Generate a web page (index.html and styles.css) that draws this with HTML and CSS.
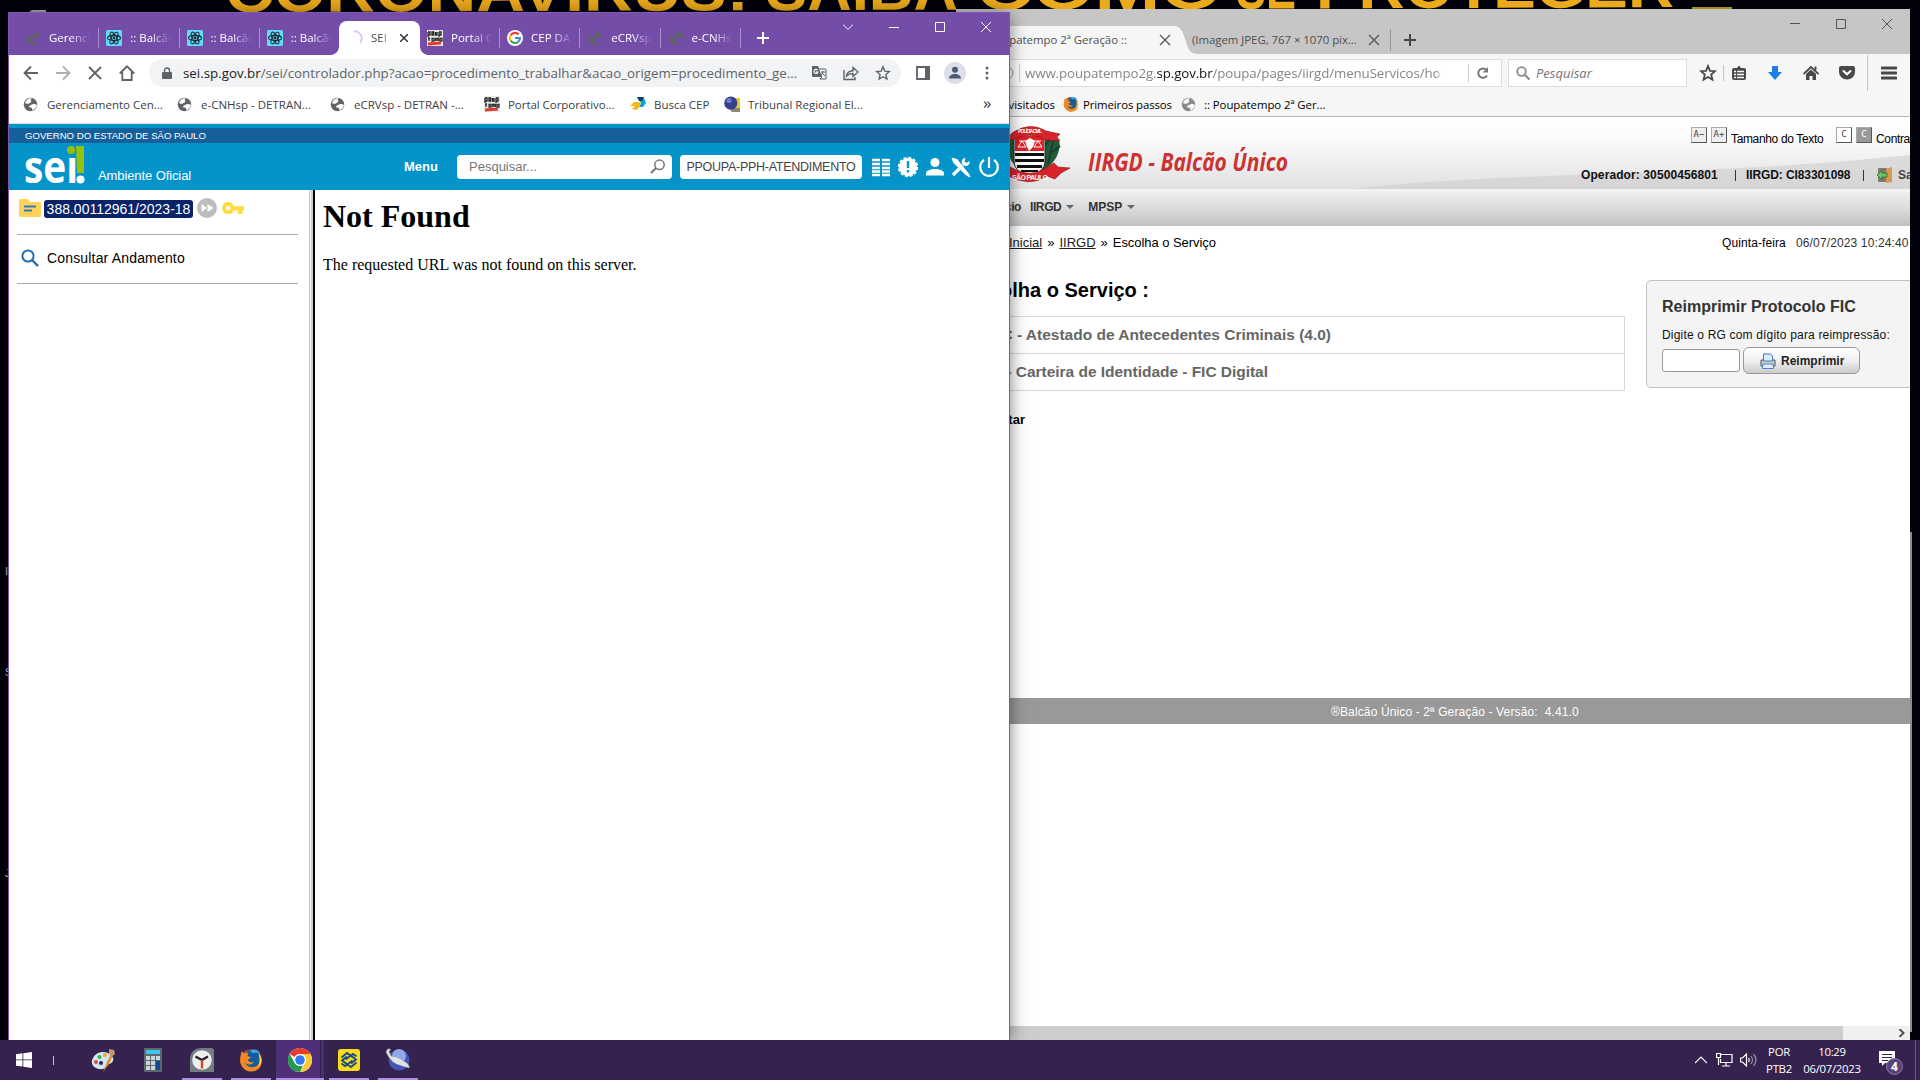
FILE: index.html
```html
<!DOCTYPE html>
<html lang="pt-BR">
<head>
<meta charset="utf-8">
<title>SEI</title>
<link rel="stylesheet" href="styles.css">
</head>
<body>
<svg class="defs" width="0" height="0">
  <defs>
    <symbol id="globe" viewBox="0 0 16 16"><circle cx="8" cy="8" r="7.2"/><path class="land" d="M2 6.500c1 .8 2.400 1 3.700.6 1-.3 1.300-1 2.300-1.300 1-.2 1-1.200.4-2C8 3 8.600 2 9.600 1.400 6.500.8 3 3 2 6.500zM9 8.200c1-.7 3-1 4.200-.5.7.3 1 .8 1.700.3-.1 3-2.400 5.600-5.400 6.600.8-1 .7-2.200-.1-2.800-1-.7-2.200-.4-2.900-1.200-.4-.6.7-1.800 2.500-2.400z"/></symbol>
    <symbol id="react" viewBox="0 0 16 16"><rect width="16" height="16" rx="1.500" fill="#61dafb"/><g fill="none" stroke="#20303a" stroke-width="1.100"><ellipse cx="8" cy="8" rx="6.500" ry="2.600"/><ellipse cx="8" cy="8" rx="6.500" ry="2.600" transform="rotate(60 8 8)"/><ellipse cx="8" cy="8" rx="6.500" ry="2.600" transform="rotate(120 8 8)"/></g><circle cx="8" cy="8" r="1.400" fill="#20303a"/></symbol>
    <symbol id="poupa" viewBox="0 0 16 16"><rect width="16" height="16" fill="#e8e8e4"/><path d="M1 2v5M1 2h2v3H1M5 2h1.600v3H5zM8.500 2v3H10V2M12 2v5M12 2h2v3h-2" fill="none" stroke="#222" stroke-width="1.300"/><path d="M2 7v4M1 8.500h2M5 8.500h2v2.500H5zM8.500 11V8.500h3V11M10 8.500V11M13 8.500h2V11h-2z" fill="none" stroke="#333" stroke-width="1.300"/><path d="M1 12.500l13-1v3l-13 1z" fill="#e23b2e"/></symbol>
    <symbol id="firefox" viewBox="0 0 24 24"><circle cx="12" cy="12.300" r="10.800" fill="#e4571b"/><circle cx="13" cy="10.500" r="8.800" fill="#145b9d"/><path d="M11 3c4-3 9-1 10.500 3-3-2-6-1-8-1z" fill="#3fa6dc"/><path d="M1.800 7c0-2 1-3.500 1.500-4 .3 1.500 1 2.200 2 2.500 1.500-.8 3-.8 4-.3-1 1-1 2-.5 3l3 .8c-.3 1.500-2.500 1.800-3 3 .6 2 3.400 3 6.200 1.500-1 3-6 4.500-9 1 1 4 6.500 6 10.500 4 4-2 5.500-6 4.500-10.500 3.500 6 1.200 15.500-9 15.500C4 23.500-.5 15 1.800 7z" fill="#f08a24"/><path d="M19.500 5c4 4 4 10 0 14 1-4 1.500-9 0-14z" fill="#fbd02b"/></symbol>
    <symbol id="chrome" viewBox="0 0 24 24"><circle cx="12" cy="12" r="12" fill="#fff"/><path d="M1.600 6A12 12 0 0 1 22.400 6H12a6 6 0 0 0-5.200 3z" fill="#e33b2e"/><path d="M22.400 6A12 12 0 0 1 12 24l5.200-9A6 6 0 0 0 17.200 9L12 6z" fill="#fcc934"/><path d="M12 24A12 12 0 0 1 1.600 6l5.200 9a6 6 0 0 0 8.200 2.200z" fill="#249a4d"/><circle cx="12" cy="12" r="6" fill="#fff"/><circle cx="12" cy="12" r="4.800" fill="#2f7df0"/></symbol>
  </defs>
</svg>

<svg class="wallpaper" viewBox="0 0 1920 1040">
  <g class="slogan" transform="rotate(-0.19 228 12)">
    <text x="225" y="12" textLength="524" lengthAdjust="spacingAndGlyphs">CORONAVIRUS:</text>
    <text x="766" y="12" textLength="192" lengthAdjust="spacingAndGlyphs">SAIBA</text>
    <text x="976" y="12" textLength="246" lengthAdjust="spacingAndGlyphs">COMO</text>
    <text x="1236" y="12" textLength="60" lengthAdjust="spacingAndGlyphs">SE</text>
    <text x="1316" y="12" textLength="358" lengthAdjust="spacingAndGlyphs">PROTEGER</text>
  </g>
  <path d="M29 12l3-2h14v2z" fill="#aaa"/>
  <rect x="1692" y="7" width="40" height="3" fill="#a79019"/>
  <text class="lbl" x="5" y="575">I</text><text class="lbl" x="5" y="676">S</text><text class="lbl" x="5" y="877">J</text>
</svg>

<section class="ff">
  <div class="ff-tabs">
    <div class="ff-tab on"><span>:: Poupatempo 2ª Geração ::</span><svg width="12" height="12" viewBox="0 0 12 12"><path d="M1 1l10 10M11 1L1 11"/></svg></div>
    <svg class="curve" width="24" height="28" viewBox="0 0 24 28"><path d="M0 0C9 0 10 7 13 16s4 11 11 12H0z" fill="#f6f6f6"/></svg>
    <div class="ff-tab two"><span>(Imagem JPEG, 767 × 1070 pix...</span><svg width="12" height="12" viewBox="0 0 12 12"><path d="M1 1l10 10M11 1L1 11"/></svg></div>
    <svg class="plus" width="12" height="12" viewBox="0 0 12 12"><path d="M6 0v12M0 6h12"/></svg>
    <div class="ff-ctl">
      <svg width="10" height="10"><path d="M0 4.500h10"/></svg>
      <svg width="10" height="10"><path d="M.5 .5h9v9h-9z"/></svg>
      <svg width="10" height="10"><path d="M0 0l10 10M10 0L0 10"/></svg>
    </div>
  </div>
  <div class="ff-nav">
    <div class="ff-url">
      <svg width="14" height="14" viewBox="0 0 14 14"><circle cx="7" cy="7" r="6" fill="none" stroke="#999"/></svg>
      <i></i><span class="addr">www.poupatempo2g.<b>sp.gov.br</b>/poupa/pages/iirgd/menuServicos/home</span><i></i>
      <svg class="reload" width="14" height="14" viewBox="0 0 14 14"><path d="M11 9.500A4.700 4.700 0 1 1 10.500 4" fill="none" stroke="#777" stroke-width="2"/><path d="M12 1v5.500H6.800z" fill="#777"/></svg>
    </div>
    <div class="ff-search"><svg width="14" height="14" viewBox="0 0 14 14"><circle cx="5.500" cy="5.500" r="4.300" fill="none" stroke="#8a8a8a" stroke-width="1.800"/><path d="M8.500 8.500l5 5" stroke="#8a8a8a" stroke-width="2.200"/></svg><span>Pesquisar</span></div>
    <div class="ff-ico">
      <svg width="18" height="18" viewBox="0 0 18 18"><path d="M9 2l2 4.800 5 .4-3.800 3.400 1.200 5L9 13l-4.400 2.600 1.200-5L2 7.200l5-.4z" fill="none" stroke="#484848" stroke-width="1.800"/></svg>
      <i></i>
      <svg width="16" height="16" viewBox="0 0 16 16"><path d="M3 3h3l2-2.500L10 3h3a2 2 0 0 1 2 2v8a2 2 0 0 1-2 2H3a2 2 0 0 1-2-2V5a2 2 0 0 1 2-2z" fill="#484848"/><path d="M3 6.500h2M6 6.500h7M3 9.500h2M6 9.500h7M3 12.500h2M6 12.500h7" stroke="#fff" stroke-width="1.500"/></svg>
      <svg width="16" height="16" viewBox="0 0 16 16"><path d="M5 1h6v6h4l-7 8-7-8h4z" fill="#1c80ea"/></svg>
      <svg width="16" height="16" viewBox="0 0 16 16"><path d="M.5 9L8 2l7.500 7" fill="none" stroke="#484848" stroke-width="1.800"/><path d="M3 9l5-4.500L13 9v6H9.500v-4h-3v4H3zM11.500 1.500h2V5h-2z" fill="#484848"/></svg>
      <svg width="16" height="16" viewBox="0 0 16 16"><path d="M2 1h12q2 0 2 2v4a8 7.500 0 0 1-16 0V3q0-2 2-2z" fill="#484848"/><path d="M4.500 6L8 9.300 11.500 6" fill="none" stroke="#fff" stroke-width="2" stroke-linecap="round"/></svg>
      <i class="long"></i>
      <svg width="16" height="14" viewBox="0 0 16 14"><path d="M1 2h14M1 7h14M1 12h14" stroke="#484848" stroke-width="3" stroke-linecap="round"/></svg>
    </div>
  </div>
  <div class="ff-marks">
    <span class="m1">Mais visitados</span>
    <svg width="16" height="16"><use href="#firefox"/></svg><span class="m2">Primeiros passos</span>
    <svg class="gray" width="15" height="15"><use href="#globe"/></svg><span class="m3">:: Poupatempo 2ª Ger...</span>
  </div>

  <div class="page">
    <header class="hd">
      <svg class="swoosh" height="36" viewBox="0 0 460 36" preserveAspectRatio="none"><path d="M0 36C130 18 290 24 460 2v34z" fill="#cfcdce" opacity=".6"/></svg>
      <svg class="crest" width="66" height="58" viewBox="0 0 66 58">
        <path d="M42 8c10 0 16 6 13 16-2 9-8 16-18 22l-2-8zM14 8C4 10 0 20 6 32c2 6 8 10 14 14z" fill="#23583b"/><path d="M50 12l-6 26M56 20l-10 8M46 14l-6 6" stroke="#164229" stroke-width="2"/>
        <path d="M10 9h31v26c0 8-7 14-15.500 14S10 43 10 35z" fill="#fff" stroke="#222"/>
        <path d="M11 10h29v15H11z" fill="#dd1f26"/><path d="M15 15h22M18 15l-4 6h8zM34 15l-4 6h8z" fill="none" stroke="#fff"/><path d="M21 15l5-3 5 3-2 6-4 4-2-4z" fill="#fff"/>
        <path d="M11 27h29v3H11zM11 33h29v3H11zM13 39h25v3H13zM17 44h17v2H17z" fill="#111"/>
        <path d="M8 7Q26-5 42 5l14 3-3 3 3 4-14-1Q26 4 8 14L4 12z" fill="#d8232a" stroke="#7c1517" stroke-width=".6"/>
        <path d="M4 40l8 4q14 7 28-1l10-6 4 4 12 1-9 5-6 6-8-3Q25 62 3 49z" fill="#d8232a" stroke="#7c1517" stroke-width=".6"/>
        <text x="14" y="7" textLength="24">POLÍCIA CIVIL</text><text x="8" y="54" textLength="36" class="sp">SÃO PAULO</text>
      </svg>
      <svg class="title" width="210" height="40" viewBox="0 0 210 40"><text x="1" y="29" textLength="200" lengthAdjust="spacingAndGlyphs">IIRGD - Balcão Único</text></svg>
      <div class="tools">
        <div class="t1"><em>A−</em><em>A+</em><span class="tam">Tamanho do Texto</span><em class="c">C</em><em class="c dark">C</em><span>Contraste</span></div>
        <div class="t2"><b class="op">Operador: 30500456801</b><s></s><b class="rg">IIRGD: CI83301098</b><s></s>
          <svg width="16" height="16" viewBox="0 0 16 16"><path d="M1 1h9v14H1z" fill="#827c70"/><path d="M9 2l6-2v15l-6 1z" fill="#d79a4e"/><path d="M0 8l5-5v3h5v4H5v3z" fill="#6cc06b" stroke="#28652b" stroke-width=".8"/></svg><b class="sair">Sair</b></div>
      </div>
    </header>
    <nav class="menu"><span class="ini">Início</span><span>IIRGD</span><u></u><span class="mp">MPSP</span><u></u></nav>
    <div class="crumb"><div class="path"><a>Página Inicial</a><span>»</span><a>IIRGD</a><span>»</span><span class="esc">Escolha o Serviço</span></div><span class="day">Quinta-feira</span><span class="date">06/07/2023 10:24:40</span></div>
    <div class="cols">
      <div class="left">
        <h2>Escolha o Serviço :</h2>
        <div class="row r1"><span>AAC - Atestado de Antecedentes Criminais (4.0)</span></div>
        <div class="row r2"><span>FIC - Carteira de Identidade - FIC Digital</span></div>
        <b class="back">Voltar</b>
      </div>
      <div class="panel">
        <h3>Reimprimir Protocolo FIC</h3>
        <label>Digite o RG com dígito para reimpressão:</label>
        <div class="form"><div class="inp"></div><div class="btn"><svg width="16" height="16" viewBox="0 0 16 16"><path d="M1 7h14v6H1z" fill="#ccc" stroke="#555"/><path d="M3.500 8V1h7l2 2v5z" fill="#dcebfb" stroke="#3b79c4"/><path d="M3 11h10l.5 4.500h-11z" fill="#e4f0fd" stroke="#4b84c5"/></svg><span>Reimprimir</span></div></div>
      </div>
    </div>
    <footer><span>®Balcão Único - 2ª Geração - Versão:&nbsp; 4.41.0</span></footer>
    <div class="hbar"><div></div><svg width="6" height="8" viewBox="0 0 6 8"><path d="M.5 0L4.500 4 .5 8" fill="none" stroke="#505050" stroke-width="2"/></svg></div>
  </div>
</section>
<div class="ff-edge"></div>

<section class="cr">
  <div class="cr-tabs">
    <div class="tab first"><svg class="dim" width="16" height="16"><use href="#globe"/></svg><span>Gerenciamento</span></div>
    <div class="tab sep"><svg width="16" height="16"><use href="#react"/></svg><span>:: Balcão Único</span></div>
    <div class="tab sep"><svg width="16" height="16"><use href="#react"/></svg><span>:: Balcão Único</span></div>
    <div class="tab sep"><svg width="16" height="16"><use href="#react"/></svg><span>:: Balcão Único</span></div>
    <div class="tab on"><svg width="16" height="16" viewBox="0 0 16 16"><path d="M5 2.500A7 7 0 0 1 11 14" transform="translate(2 -1)" fill="none" stroke="#dcc3fb" stroke-width="1.800"/></svg><span>SEI -</span><svg class="x" width="8" height="8" viewBox="0 0 8 8"><path d="M0 0l8 8M8 0L0 8"/></svg></div>
    <div class="tab"><svg width="16" height="16"><use href="#poupa"/></svg><span>Portal Corporativo</span></div>
    <div class="tab sep"><svg width="16" height="16" viewBox="0 0 16 16"><circle cx="8" cy="8" r="8" fill="#fff"/><g fill="none" stroke-width="2.200"><path d="M3.600 5.500A5 5 0 0 1 11.700 4.500" stroke="#ea4335"/><path d="M3.600 5.500a5 5 0 0 0 0 5" stroke="#fbbc05"/><path d="M3.600 10.500a5 5 0 0 0 7.700 1.200" stroke="#34a853"/><path d="M11.300 11.700A5 5 0 0 0 13 8H8" stroke="#4285f4"/></g></svg><span>CEP DA RUA</span></div>
    <div class="tab sep"><svg class="dim" width="16" height="16"><use href="#globe"/></svg><span>eCRVsp -</span></div>
    <div class="tab sep"><svg class="dim" width="16" height="16"><use href="#globe"/></svg><span>e-CNHsp</span></div>
    <div class="new"><svg width="12" height="12" viewBox="0 0 12 12"><path d="M6 0v12M0 6h12"/></svg></div>
    <div class="ctl">
      <svg width="10" height="10"><path d="M0 2.500l5 5 5-5"/></svg>
      <svg width="10" height="10"><path d="M0 5.500h10"/></svg>
      <svg width="10" height="10"><path d="M.5 .5h9v9h-9z"/></svg>
      <svg width="10" height="10"><path d="M0 0l10 10M10 0L0 10"/></svg>
    </div>
  </div>
  <div class="bar">
    <svg width="16" height="16" viewBox="0 0 16 16"><path d="M15 8H2M8 1.500L1.500 8 8 14.500"/></svg>
    <svg class="off" width="16" height="16" viewBox="0 0 16 16"><path d="M1 8h13M8 1.500L14.500 8 8 14.500"/></svg>
    <svg width="16" height="16" viewBox="0 0 16 16"><path d="M2 2l12 12M14 2L2 14"/></svg>
    <svg width="16" height="16" viewBox="0 0 16 16"><path d="M.8 8.500L8 1.300l7.200 7.200M3.300 7v8h9.400V7"/></svg>
    <div class="omni">
      <svg width="10" height="13" viewBox="0 0 10 13"><path class="solid" d="M1 5h8q1 0 1 1v5q0 1-1 1H1q-1 0-1-1V6q0-1 1-1z"/><path class="thin" d="M2.500 5.500V3.500a2.500 2.500 0 0 1 5 0v2"/></svg>
      <span><b>sei.sp.gov.br</b>/sei/controlador.php?acao=procedimento_trabalhar&amp;acao_origem=procedimento_ge...</span>
      <svg width="16" height="16" viewBox="0 0 16 16"><path class="solid" d="M1 1h6l4 11H2q-1 0-1-1z"/><path class="fine" d="M8 4h6q1 0 1 1v9H9l2-2M10 7h4M12 6v1l-2 4M11 8l3 3"/><path class="cut" d="M6.500 5A2 2 0 1 0 7 7H5"/></svg>
      <svg width="16" height="16" viewBox="0 0 16 16"><path class="thin" d="M1 5v9.500h11V12M3.500 11Q4 6 10 5.700V2.500l5 4.500-5 4.500V8.500Q6 8.500 3.500 11z"/></svg>
      <svg width="16" height="16" viewBox="0 0 16 16"><path class="thin" d="M8 1.800l1.800 4.300 4.600.4-3.500 3 1 4.600L8 11.700l-3.900 2.400 1-4.600-3.500-3 4.600-.4z"/></svg>
    </div>
    <svg class="side" width="14" height="14" viewBox="0 0 14 14"><path d="M1 1h12v12H1z"/><path class="solid" d="M9 0h5v14H9z"/></svg>
    <svg class="av" width="22" height="22" viewBox="0 0 22 22"><circle cx="11" cy="11" r="11" fill="#dcdfe6"/><circle cx="11" cy="7.700" r="3" fill="#4c5b76"/><path class="who" d="M5 16.500c0-6 12-6 12 0z"/></svg>
    <svg class="dots" width="4" height="14" viewBox="0 0 4 14"><g fill="#5f6368"><circle cx="2" cy="2" r="1.500"/><circle cx="2" cy="7" r="1.500"/><circle cx="2" cy="12" r="1.500"/></g></svg>
  </div>
  <div class="marks">
    <div class="k1"><svg class="gl" width="15" height="15"><use href="#globe"/></svg><span>Gerenciamento Cen...</span></div>
    <div class="k2"><svg class="gl" width="15" height="15"><use href="#globe"/></svg><span>e-CNHsp - DETRAN...</span></div>
    <div class="k3"><svg class="gl" width="15" height="15"><use href="#globe"/></svg><span>eCRVsp - DETRAN -...</span></div>
    <div class="k4"><svg width="16" height="16"><use href="#poupa"/></svg><span>Portal Corporativo...</span></div>
    <div class="k5"><svg width="16" height="14" viewBox="0 0 16 14"><path d="M8 1h6l2 5-3 4H9l2-4z" fill="#0fa3dd"/><path d="M7 0h7l-2 4H9z" fill="#123f63"/><path d="M4 5h5l2 1-3 6-2 1-4-1 3-3H0z" fill="#f5b91b"/></svg><span>Busca CEP</span></div>
    <div class="k6"><svg width="16" height="16" viewBox="0 0 16 16"><path d="M11 2h5v10h-5z" fill="#f6c628"/><path d="M4 12h12v4H8z" fill="#8a8a73"/><circle cx="6.800" cy="7" r="6.600" fill="#35418d"/><circle cx="5" cy="4.500" r="2.600" fill="#6f7bc4"/></svg><span>Tribunal Regional El...</span></div>
    <div class="more">»</div>
  </div>
  <div class="gov"><span>GOVERNO DO ESTADO DE SÃO PAULO</span></div>
  <div class="sei">
    <svg class="logo" width="64" height="42" viewBox="0 0 64 42"><text x="-1" y="38" textLength="54" lengthAdjust="spacingAndGlyphs">seı</text><circle cx="46" cy="5" r="4" fill="#97bf0d"/><path d="M51 1h8v27h-7z" fill="#97bf0d"/><circle cx="55.500" cy="34.500" r="4" fill="#fff"/></svg>
    <span class="amb">Ambiente Oficial</span>
    <b class="mn">Menu</b>
    <div class="q"><span>Pesquisar...</span><svg width="16" height="16" viewBox="0 0 16 16"><circle cx="9.500" cy="5.800" r="4.700" fill="none" stroke="#777" stroke-width="1.500"/><path d="M6 9l-5 5" stroke="#777" stroke-width="2"/></svg></div>
    <div class="unit"><span>PPOUPA-PPH-ATENDIMENTO</span></div>
    <div class="si">
      <svg width="20" height="20" viewBox="0 0 20 20"><path d="M1 3h8M1 7h8M1 11h8M1 14.500h8M1 18h8M11 3h8M11 7h8M11 11h8M11 14.500h8M11 18h8" stroke="#fff" stroke-width="2.400"/></svg>
      <svg width="22" height="22" viewBox="0 0 22 22"><circle cx="11" cy="11" r="9" fill="#fff" stroke="#fff" stroke-width="2.400" stroke-dasharray="3 1.700"/><path d="M11 5v7M11 14v2.500" stroke="#0494ca" stroke-width="2.400"/></svg>
      <svg width="20" height="20" viewBox="0 0 20 20"><circle cx="10" cy="5.500" r="4.500" fill="#fff"/><path d="M1 18.500v-2c0-6 18-6 18 0v2z" fill="#fff"/></svg>
      <svg width="20" height="20" viewBox="0 0 20 20"><path d="M2 2l4 1 1 2 10 12 1 2-3-2L3 5z" stroke="#fff" stroke-width="2" fill="#fff"/><path d="M11.500 8.500L2 18" stroke="#fff" stroke-width="3.200"/><path d="M18.500 4a4 4 0 1 1-4-3l-1 3.500 2 1.500z" fill="#fff"/></svg>
      <svg class="pw" width="22" height="22" viewBox="0 0 22 22"><path d="M6 3.800a8.800 8.800 0 1 0 10 0M11 1v11" fill="none" stroke="#fff" stroke-width="2.200"/></svg>
    </div>
  </div>
  <div class="body">
    <aside>
      <div class="proc">
        <svg width="22" height="20" viewBox="0 0 22 20"><path d="M1 1h8l2 3h10q1 0 1 1v13q0 1-1 1H1q-1 0-1-1V2q0-1 1-1z" fill="#ffd35b"/><path d="M5 8.500h12M5 12.500h8" stroke="#2d7fb8" stroke-width="1.800"/></svg>
        <span>388.00112961/2023-18</span>
        <svg class="ffw" width="20" height="20" viewBox="0 0 20 20"><circle cx="10" cy="10" r="10" fill="#bdbdbd"/><path d="M4.500 6l5.500 4-5.500 4zM10.500 6l6 4-6 4z" fill="#fff"/></svg>
        <svg width="22" height="13" viewBox="0 0 22 13"><path d="M6.200 0a6 6 0 0 1 5.600 4.200H22v4h-1.500V12H16V8.200h-4.200A6 6 0 1 1 6.200 0zm0 3.800a2.300 2.300 0 1 0 .1 4.600 2.300 2.300 0 0 0-.1-4.600z" fill="#ffdc3a"/></svg>
      </div>
      <div class="cons"><svg width="18" height="18" viewBox="0 0 18 18"><circle cx="7" cy="7" r="5.600" fill="none" stroke="#1f6fae" stroke-width="2"/><path d="M11 11l6 6" stroke="#1f6fae" stroke-width="2.400"/></svg><span>Consultar Andamento</span></div>
    </aside>
    <div class="split"></div>
    <main><h1>Not Found</h1><p>The requested URL was not found on this server.</p></main>
  </div>
</section>

<div class="task">
  <svg class="a0" width="16" height="16" viewBox="0 0 16 16"><path d="M0 2.300L6.500 1.300v6.200H0zM7.300 1.200L16 0v7.500H7.300zM0 8.300h6.500v6.300L0 13.700zM7.300 8.300H16V16l-8.700-1.200z" fill="#fff"/></svg>
  <i class="bar1"></i>
  <div class="ap n1"><svg width="24" height="24" viewBox="0 0 24 24"><path d="M2 10C5 3 15 2 20 7s1 8-2 9-3 4-6 5C5 22-2 17 2 10z" fill="#cfe6f5"/><circle cx="5" cy="14" r="2" fill="#e04b3a"/><circle cx="8.500" cy="9" r="2" fill="#3fae49"/><circle cx="14" cy="7" r="2" fill="#f2a632"/><circle cx="10" cy="15" r="2" fill="#36224f"/><path d="M20 6l-4 8-4 10 6-8 4-9z" fill="#ea8a25"/><path d="M18 1l5 1 1 4-4 3-2-3z" fill="#c8966a"/></svg></div>
  <div class="ap"><svg width="18" height="24" viewBox="0 0 18 24"><rect width="18" height="24" rx="1" fill="#5d676c"/><path d="M2 2h14v4H2z" fill="#3cc6f2"/><path d="M2 8h4v4H2zM7 8h4v4H7zM12 8h4v4h-4zM2 13h4v4H2zM7 13h4v4H7zM2 18h4v4H2zM7 18h4v4H7z" fill="#ccd5d9"/><path d="M12 13h4v9h-4z" fill="#124b8d"/></svg></div>
  <div class="ap run"><svg width="24" height="24" viewBox="0 0 24 24"><path d="M0 12Q0 0 12 0h9q3 0 3 3v21H0z" fill="#737c82"/><circle cx="12" cy="12" r="9.800" fill="#eee"/><path d="M12 12L5.500 8.500M12 12l6-3.500" stroke="#222" stroke-width="2.400"/><path d="M12 13v7.500" stroke="#d9441e" stroke-width="2.400"/></svg></div>
  <div class="ap run"><svg width="24" height="24"><use href="#firefox"/></svg></div>
  <div class="ap run act"><svg width="24" height="24"><use href="#chrome"/></svg></div>
  <div class="ap run"><svg width="22" height="22" viewBox="0 0 22 22"><rect width="22" height="22" rx="3" fill="#f9dd16"/><path d="M3.500 8.500L9 4l9 6.500-5 4M18.500 13.500L13 18 4 11.500l5-4M3.500 14.500l3.500 2.500 7.500-5.500M18.500 7.500L15 5l-7.500 5.500" fill="none" stroke="#1e4a8f" stroke-width="1.900"/></svg></div>
  <div class="ap run"><svg width="26" height="24" viewBox="0 0 26 24"><circle cx="14" cy="12" r="10.500" fill="#4355b5"/><circle cx="14" cy="8" r="7" fill="#93a7e4"/><path d="M1 4Q2 0 5 1l1 1-2 1 2 5q5 0 10 3l7 5q2 3 1 4l-7-2Q6 16 1 4z" fill="#dfe2e6" stroke="#888" stroke-width=".5"/></svg></div>
  <div class="tray">
    <svg class="ch" width="12" height="8" viewBox="0 0 12 8"><path d="M0 7l6-6 6 6"/></svg>
    <svg class="mo" width="17" height="14" viewBox="0 0 17 14"><path d="M5 1.500h11v8H4.500V6M10 10v3M6 13h8M.5 .5h4v4h-4zM2.500 5v7"/></svg>
    <svg class="so" width="17" height="14" viewBox="0 0 17 14"><path d="M.5 5h2l4-4v12l-4-4h-2zM8.500 5q1.500 2 0 4"/><path d="M11 3q3 4 0 8M13.500 1q5 6 0 12" opacity=".5"/></svg>
    <div class="lang"><span>POR</span><span>PTB2</span></div>
    <div class="clock"><span>10:29</span><span>06/07/2023</span></div>
    <div class="note"><svg width="26" height="26" viewBox="0 0 26 26"><path class="sheet" d="M1 1h16v12H7l-3 3v-3H1z"/><path class="lines" d="M4 4.500h10M4 7.500h10M4 10.500h6"/><circle cx="16.500" cy="16.500" r="8" fill="#5a4379" stroke="#8d78aa"/><text x="13" y="21">4</text></svg></div>
    <i></i>
  </div>
</div>
</body>
</html>
```
FILE: styles.css
```css
*{box-sizing:border-box}
html,body{margin:0;height:100%}
body{position:relative;width:1920px;height:1080px;overflow:hidden;background:#02020d;font-family:"Open Sans","Noto Sans",sans-serif;font-size:12px}
svg{display:block;flex:none}
span,b{white-space:nowrap}
.defs{position:absolute}
.land{fill:var(--land,#fff)}
.wallpaper{position:absolute;left:0;top:0;width:1920px;height:1040px}
.slogan text{font:bold 60px "Liberation Sans",sans-serif;fill:#eba91c}
.lbl{font:11px "Liberation Sans",sans-serif;fill:#cde}

/* Firefox window */
.ff{position:absolute;left:956px;top:9px;width:954px;height:1031px;background:#fff;overflow:hidden;display:flex;flex-direction:column}
.ff-edge{position:absolute;left:1910px;top:532px;width:2px;height:500px;background:#8c8c8c}
.ff-tabs{height:45px;flex:none;background:#c6c6c6;display:flex;align-items:flex-end;color:#4f4f4f;font-size:11.4px}
.ff-tab{display:flex;align-items:center;height:28px}
.ff-tab span{margin-top:-2px}
.ff-tab svg path{stroke:#555;stroke-width:1.300}
.ff-tab.on{width:217px;background:#f6f6f6;justify-content:flex-end;gap:32px;padding-right:2px}
.ff-tab.two{width:199px;justify-content:space-between;padding-right:10px;border-right:1px solid #999;height:22px;margin-bottom:3px;margin-left:-5px}
.ff-tab.two span{letter-spacing:-.03px}
.plus{margin:0 0 8px 13px}
.plus path{stroke:#444;stroke-width:2}
.ff-ctl{margin-left:auto;display:flex;gap:36px;align-self:flex-start;padding:10px 18px 0 0}
.ff-ctl path{fill:none;stroke:#555}
.ff-nav{height:38px;flex:none;background:#f6f6f6;display:flex;align-items:center;padding-left:46px}
.ff-url{width:500px;height:28px;background:#fff;border:1px solid #dcdcdc;display:flex;align-items:center}
.ff-url>svg:first-child{margin-left:-3px}
.ff-url i{width:1px;height:18px;background:#ccc;margin-left:5px}
.addr{width:443px;padding-left:5px;color:#858585;font-size:13.3px;letter-spacing:-.1px;overflow:hidden;-webkit-mask:linear-gradient(90deg,#000 416px,transparent 422px)}
.addr b{font-weight:400;color:#111}
.ff-url .reload{margin-left:7px}
.ff-search{width:179px;height:28px;margin-left:6px;background:#fff;border:1px solid #dcdcdc;display:flex;align-items:center;gap:6px;padding-left:7px;color:#757575;font-style:italic;font-size:13px}
.ff-ico{display:flex;align-items:center;margin-left:12px}
.ff-ico i{width:1px;height:16px;background:#c4c4c4;margin:0 7px 0 6px}
.ff-ico svg+svg{margin-left:20px}
.ff-ico i.long{height:36px;margin:0 13px 0 12px}
.ff-marks{height:25px;flex:none;background:#f6f6f6;border-bottom:1px solid #b4b4b4;display:flex;align-items:center;font-size:11.4px;color:#000}
.m1{width:99px;text-align:right;margin-right:8px}
.m2{width:90px;margin:0 8px 0 4px;letter-spacing:-.1px}
.m3{margin-left:8px;letter-spacing:-.05px}
.gray{fill:#8a8a8a}

.page{flex:1;display:flex;flex-direction:column;font-family:"Liberation Sans",Arial,sans-serif;background:#fff}
.hd{height:72px;flex:none;position:relative;display:flex;background:linear-gradient(#fff,#fbfbfb 30%,#e2e1e1)}
.swoosh{position:absolute;right:0;bottom:0;width:560px}
.crest{margin:9px 0 0 48px;position:relative}
.crest text{font:bold 5px "Liberation Sans",sans-serif;fill:#fff}
.crest text.sp{font-size:7px}
.title{margin:25px 0 0 17px}
.title text{font:italic bold 25px "Open Sans",sans-serif;fill:#cc3333}
.tools{position:absolute;right:0;top:0;width:330px;height:72px;overflow:hidden}
.t1{display:flex;align-items:flex-start;padding:10px 0 0 111px;height:30px;font-size:12px;line-height:14px;color:#000}
.t1 em{flex:none;width:16px;height:16px;margin-right:4px;border:1px solid #aaa;border-right-color:#555;border-bottom-color:#555;background:#eee;color:#444;font:9px/13px "DejaVu Sans Mono",monospace;text-align:center}
.t1 em.c{background:#fff}
.t1 em.dark{background:#999;color:#fff}
.t1 span{flex:none;padding-top:5px;letter-spacing:-.35px}
.t1 .tam{width:105px}
.t2{display:flex;align-items:center;margin-top:19px;height:18px;padding-left:1px;font-size:12px;color:#111}
.t2>*{flex:none}
.t2 .op{width:154px;letter-spacing:.1px}.t2 .rg{width:117px}
.t2 s{width:1px;height:11px;background:#333}
.t2 s+.rg{margin-left:10px;letter-spacing:-.1px}
.t2 s+svg{margin:0 5px 0 13px}
.sair{color:#444}
.menu{height:37px;flex:none;background:linear-gradient(#f4f4f4,#dcdcdc 50%,#c2c2c2);display:flex;align-items:center;font-weight:bold;font-size:12px;color:#333;padding-bottom:1px}
.menu span{letter-spacing:-.4px}
.menu .ini{width:65px;text-align:right;margin-right:9px}
.menu u{border:4px solid transparent;border-top-color:#666;border-bottom:0;margin-left:5px}
.menu .mp{margin-left:14px;letter-spacing:0}
.crumb{height:32px;flex:none;display:flex;align-items:center;font-size:12px;padding-top:1px}
.path{display:flex;gap:5px;width:260px;justify-content:flex-end;font-size:13px}
.path a{text-decoration:underline;color:#222}
.path,.day{color:#000}
.path .esc{letter-spacing:-.05px}
.day{margin-left:506px;width:74px;letter-spacing:.1px}
.date{color:#333;letter-spacing:.13px}
.cols{height:440px;flex:none;display:flex;padding-top:21px}
.left{width:669px;flex:none}
h2{margin:0;width:193px;text-align:right;font-size:20px;line-height:23px;white-space:nowrap}
.row{height:37px;border-right:1px solid #d8d8d8;border-top:1px solid #d8d8d8;display:flex;align-items:center;font-weight:bold;font-size:15.500px;color:#666}
.row span{text-align:right}
.r1{margin-top:14px}
.r1 span{width:375px}
.r2{height:38px;border-bottom:1px solid #d8d8d8}
.r2 span{width:312px;letter-spacing:-.03px}
.back{display:block;width:69px;text-align:right;font-size:13px;margin-top:21px}
.panel{margin:1px 0 0 21px;width:300px;flex:none;height:108px;border:1px solid #c0c0c0;border-radius:5px;background:#f4f4f4;padding:16px 15px}
h3{margin:0;font-size:16px;line-height:19px;color:#333;white-space:nowrap}
label{display:block;margin-top:11px;font-size:12px;line-height:17px;white-space:nowrap;color:#111;letter-spacing:.18px}
.form{display:flex;margin-top:3px;gap:3px;align-items:center}
.inp{width:78px;height:23px;background:#fff;border:1px solid #999;border-radius:3px}
.btn{width:117px;height:27px;border:1px solid #999;border-radius:6px;background:linear-gradient(#fff,#f0f0f0 50%,#cbcbcb);display:flex;align-items:center;gap:5px;padding-left:16px;font-weight:bold;font-size:12px;color:#222}
footer{height:26px;flex:none;background:#999;color:#fff;font-size:12px;display:flex;align-items:center;padding:1px 0 0 375px;letter-spacing:.13px}
.hbar{margin-top:auto;height:14px;flex:none;background:#f0f0f0;display:flex;align-items:center;justify-content:space-between;padding-right:5px}
.hbar div{width:887px;height:14px;background:#cdcdcd}

/* Chrome window */
.cr{position:absolute;left:8px;top:12px;width:1002px;height:1028px;background:#fff;border:1px solid #7f55b5;border-bottom:0;display:flex;flex-direction:column;box-shadow:0 2px 16px rgba(0,0,0,.5)}
.cr-tabs{height:42px;flex:none;background:#744da9;display:flex;align-items:flex-end;color:#fff;font-size:11.500px;padding-left:9px}
.tab{width:80.250px;height:34px;display:flex;align-items:center;padding-left:7px;gap:8px;flex:none;position:relative}
.tab span{width:42px;overflow:hidden;margin-top:-1px;-webkit-mask:linear-gradient(90deg,#000 50%,transparent 98%)}
.tab.sep{border-left:1px solid #a98fca;height:20px;margin-bottom:7px}
.tab.on{width:81px;background:#fff;color:#45474b;border-radius:8px 8px 0 0;padding-left:8px}
.tab.on+.tab{width:79px}
.tab.on span{width:21px}
.tab.on::before,.tab.on::after{content:"";position:absolute;bottom:0;width:8px;height:8px}
.tab.on::before{left:-8px;background:radial-gradient(circle at 0 0,#744da9 7.500px,#fff 8px)}
.tab.on::after{right:-8px;background:radial-gradient(circle at 100% 0,#744da9 7.500px,#fff 8px)}
.x path{stroke:#333;stroke-width:1.500}
.dim{fill:#62616f;--land:#744da9}
.new{border-left:1px solid #a98fca;height:20px;margin-bottom:7px;padding:4px 0 0 16px}
.new path{stroke:#fff;stroke-width:2}
.ctl{margin-left:auto;display:flex;gap:36px;align-self:flex-start;padding:9px 18px 0 0}
.ctl path{fill:none;stroke:#fff}
.bar{height:36px;flex:none;display:flex;align-items:center;padding-left:14px;gap:16px}
.bar path{fill:none;stroke:#5f6368;stroke-width:1.800}
.bar .off{opacity:.5}
.bar .solid{fill:#5f6368;stroke:none}
.bar .thin{stroke-width:1.400}
.bar .fine{stroke-width:1}
.bar .cut{stroke:#fff;stroke-width:1.200}
.bar .who{fill:#4c5b76;stroke:none}
.omni{width:752px;height:28px;margin-left:-2px;border-radius:14px;background:#f1f3f4;display:flex;align-items:center;padding-left:13px}
.omni span{margin-left:11px;width:619px;font-size:13.300px;color:#5f6368;letter-spacing:.01px}
.omni b{font-weight:400;color:#202124}
.omni span+svg{margin-left:9px}
.omni svg+svg{margin-left:16px}
.side{margin-left:-1px}
.av{margin-left:-2px}
.dots{margin-left:3px}
.marks{height:33px;flex:none;display:flex;align-items:center;font-size:11.500px;color:#3c4043;border-bottom:1px solid #dadce0;padding:0 0 6px 14px}
.marks>div{display:flex;align-items:center;gap:9px;flex:none}
.gl{fill:#5f6368}
.k1{width:154px}.k2{width:153px}.k3{width:154px}.k4{width:146px}.k5{width:94px}.k6{width:259px}
.marks .k4{gap:8px}
.k4 span{letter-spacing:-.05px}
.k6 svg,.k5 svg{margin-right:-1px}
.marks .more{font-size:17px;margin-bottom:3px}
.gov{height:19px;flex:none;background:#155f9b;border-top:4px solid #0494ca;color:#fff;font:9.600px/15px "Liberation Sans",sans-serif;padding-left:16px}
.sei{height:47px;flex:none;background:#0494ca;display:flex;align-items:center;color:#fff;font-family:"Liberation Sans",sans-serif;font-size:14px;padding-left:16px}
.logo{margin-top:-2px}
.logo text{font:bold 44px "Open Sans",sans-serif;fill:#fff}
.amb{margin:18px 0 0 9px;width:306px;font-size:13px;letter-spacing:-.1px}
.mn{width:53px;font-size:13px}
.q{width:215px;height:24px;border-radius:4px;background:#fff;color:#777;display:flex;align-items:center;justify-content:space-between;padding:0 6px 0 12px;font-size:13px}
.unit{width:182px;height:24px;border-radius:4px;background:#fff;color:#444;margin-left:8px;display:flex;align-items:center;justify-content:center;font-size:12.500px;letter-spacing:-.27px}
.si{display:flex;gap:6px;margin-left:9px;align-items:center}
.pw{margin-left:1px}
.body{flex:1;display:flex}
aside{width:300px;padding:7px 11px 0 8px}
.proc{height:38px;border-bottom:1px solid #aaa;display:flex;align-items:flex-start;padding-left:2px;font-family:"Liberation Sans",sans-serif;font-size:14px}
.proc>svg:first-child{margin-top:1px}
.proc span{height:18px;margin:3px 4px 0 3px;width:149px;line-height:18px;background:#0a246a;color:#fff;border-radius:3px;text-align:center}
.proc .ffw{margin:1px 5px 0 0}
.proc svg:last-child{margin-top:5px}
.cons{height:49px;border-bottom:1px solid #aaa;display:flex;align-items:center;padding:0 0 2px 5px;gap:8px;font-family:"Liberation Sans",sans-serif;font-size:14px;letter-spacing:.17px}
.cons svg{margin-left:-1px}
.split{width:6px;background:linear-gradient(90deg,#c8c8c0 1px,#f4f4f0 1px 2px,#d0d0c8 2px 4px,#000 4px)}
main{padding-left:8px;font-family:"Liberation Serif",serif;font-size:16px}
h1{font-size:32px;line-height:37px;margin:8px 0 0}
p{margin:21px 0 0;line-height:18px}

/* Taskbar */
.task{position:absolute;left:0;top:1040px;width:1920px;height:40px;background:#36224f;display:flex;align-items:center;color:#fff}
.a0{margin-left:16px}
.bar1{width:1px;height:9px;background:#c9bfd6;margin:0 30px 0 21px}
.ap{width:40px;height:40px;margin-right:9px;display:flex;align-items:center;justify-content:center;border-bottom:2px solid transparent;padding-top:2px}
.ap.n1{margin-left:-1px;margin-right:10px}
.run{border-color:#b18fe3}
.act{width:48px;margin:0 5px 0 -4px;background:linear-gradient(90deg,#4f3078 44px,#36224f 44px 45px,#4a2f70 45px)}
.act svg{margin-left:-1px}
.tray{margin-left:auto;display:flex;align-items:center;height:40px}
.tray path{fill:none;stroke:#fff;stroke-width:1.200}
.tray .sheet{fill:#fff;stroke:none}
.tray .lines{stroke:#36224f}
.ch{margin-right:9px}.mo{margin-right:7px}
.lang,.clock{display:flex;flex-direction:column;align-items:center;font-size:11.400px;line-height:17px;margin-top:-1px}
.lang{width:26px;margin-left:9px}
.clock{width:60px;margin-left:10px}
.lang span,.clock span{letter-spacing:-.3px}
.note{margin:5px 0 0 16px}
.note text{font:bold 12px "Open Sans",sans-serif;fill:#fff}
.tray>i{width:1px;height:40px;background:#6b5a82;margin:0 4px 0 11px}
```
